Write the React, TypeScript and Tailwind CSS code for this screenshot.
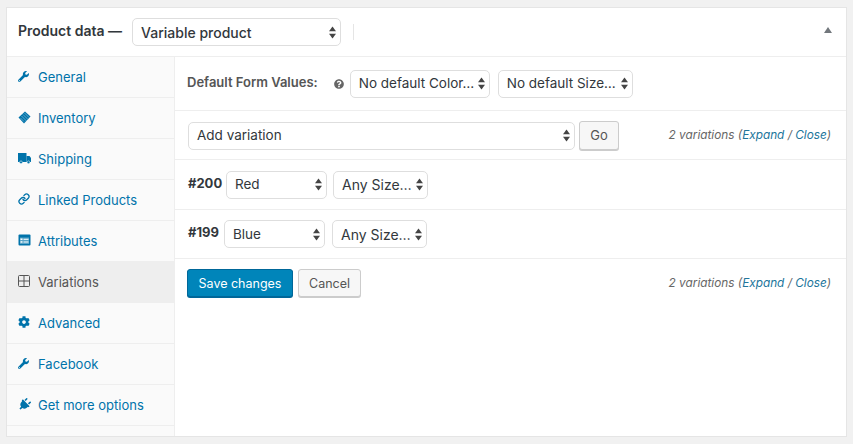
import React from "react";
import { FaWrench, FaCog, FaPlug, FaQuestionCircle } from "react-icons/fa";
import { Link as LinkIcon } from "lucide-react";

const Arrows = () => (
  <svg width="7" height="13" viewBox="0 0 7 13" className="shrink-0 text-[#444]" fill="currentColor">
    <path d="M3.5 0.5 L7 5.2 H0 Z" />
    <path d="M0 7.8 H7 L3.5 12.5 Z" />
  </svg>
);

const Select = ({ label, className, size = "text-[13.5px]" }: { label: string; className: string; size?: string }) => (
  <div className={"flex h-[28px] items-center justify-between rounded-[5px] border border-[#dedede] bg-white pl-[8px] pr-[4px] text-[#32373c] " + size + " " + className}>
    <span className="whitespace-nowrap">{label}</span>
    <Arrows />
  </div>
);

const TagIcon = () => (
  <svg width="13" height="13" viewBox="0 0 13 13">
    <path d="M7 0.5 L12.5 5.5 L6 12.5 L0.5 6.5 Z" fill="#0073aa" />
    <path d="M3.5 5 L8.5 10 M5 3.5 L10 8.5 M2.5 7 L6 10.5 M6.5 2 L11 6.5" stroke="#9cc9df" strokeWidth="0.6" />
  </svg>
);

const TruckIcon = () => (
  <svg width="13" height="11" viewBox="0 0 13 11" fill="#0073aa">
    <rect x="0" y="0" width="8.5" height="9" />
    <path d="M8.5 3 H11.5 L13 5 V9 H8.5 Z" />
    <circle cx="3" cy="9.3" r="1.4" stroke="#fff" strokeWidth="0.5" />
    <circle cx="10.5" cy="9.3" r="1.4" stroke="#fff" strokeWidth="0.5" />
  </svg>
);

const CardIcon = () => (
  <svg width="13" height="12" viewBox="0 0 13 12">
    <rect x="0.5" y="0.5" width="12" height="11" rx="1" fill="#0073aa" />
    <rect x="2" y="3.5" width="9" height="6.5" fill="#fff" opacity="0.35" />
    <rect x="2.5" y="4.5" width="2" height="1.5" fill="#fff" />
    <rect x="2.5" y="7.2" width="2" height="1.5" fill="#fff" />
    <rect x="5.5" y="4.8" width="5" height="1" fill="#fff" />
    <rect x="5.5" y="7.5" width="5" height="1" fill="#fff" />
  </svg>
);

const GridIcon = () => (
  <svg width="12" height="12" viewBox="0 0 12 12" fill="none" stroke="#555" strokeWidth="1">
    <rect x="0.5" y="0.5" width="11" height="11" rx="1" />
    <path d="M6 0.5 V11.5 M0.5 6 H11.5" />
  </svg>
);

const tabs: { label: string; icon: React.ReactNode; active?: boolean }[] = [
  { label: "General", icon: <FaWrench size={11} /> },
  { label: "Inventory", icon: <TagIcon /> },
  { label: "Shipping", icon: <TruckIcon /> },
  { label: "Linked Products", icon: <LinkIcon size={12} strokeWidth={2.6} /> },
  { label: "Attributes", icon: <CardIcon /> },
  { label: "Variations", icon: <GridIcon />, active: true },
  { label: "Advanced", icon: <FaCog size={12} /> },
  { label: "Facebook", icon: <FaWrench size={11} /> },
  { label: "Get more options", icon: <FaPlug size={13} className="rotate-[45deg]" /> },
];

const Counter = () => (
  <span className="text-[11.8px] italic text-[#666]">
    2 variations (<span className="text-[#21759b]">Expand</span> / <span className="text-[#21759b]">Close</span>)
  </span>
);

export default function App() {
  return (
    <div className="h-[444px] w-[853px] overflow-hidden bg-[#f1f1f1] pl-[6px] pt-[7px] font-['Inter','Liberation_Sans',sans-serif]">
      <div className="flex h-[430px] w-[841px] flex-col border border-[#e5e5e5] bg-white">
        <div className="flex h-[49px] shrink-0 items-center border-b border-[#eeeeee] pl-[11px] pr-[14px]">
          <span className="pb-[4px] text-[14px] font-semibold text-[#32373c]">Product data —</span>
          <Select label="Variable product" size="text-[14px] font-medium" className="ml-[10px] w-[209px]" />
          <div className="ml-[12px] h-[16px] w-px bg-[#e5e5e5]" />
          <svg width="8" height="6" viewBox="0 0 8 6" className="ml-auto mb-[4px]" fill="#72777c">
            <path d="M4 0 L8 6 H0 Z" />
          </svg>
        </div>
        <div className="flex min-h-0 flex-1">
          <div className="w-[168px] shrink-0 border-r border-[#eeeeee] bg-[#fafafa]">
            {tabs.map((t) => (
              <div
                key={t.label}
                className={
                  "flex h-[41px] items-center border-b pl-[11px] pt-[2px] text-[13px] " +
                  (t.active ? "border-[#eeeeee] bg-[#eeeeee] text-[#555]" : "border-[#eeeeee] text-[#0073aa]")
                }
              >
                <span className="flex w-[20px] -translate-y-[2px] items-center">{t.icon}</span>
                {t.label}
              </div>
            ))}
          </div>
          <div className="min-w-0 flex-1 text-[#32373c]">
            <div className="flex h-[54px] items-center border-b border-[#eeeeee] pl-[12px]">
              <span className="pb-[2px] text-[13px] font-semibold text-[#555]">Default Form Values:</span>
              <FaQuestionCircle size={10} className="ml-[16px] text-[#666]" />
              <Select label="No default Color…" className="ml-[6px] w-[140px]" />
              <Select label="No default Size…" className="ml-[8px] w-[135px]" />
            </div>
            <div className="flex h-[49px] items-center border-b border-[#eeeeee] pl-[13px] pr-[15px]">
              <Select label="Add variation" className="mt-[1px] w-[387px]" />
              <div className="ml-[4px] flex h-[29px] w-[40px] items-center justify-center rounded-[3px] border border-[#cccccc] bg-[#f7f7f7] pt-[2px] text-[13px] text-[#555] shadow-[0_1px_0_#ccc]">Go</div>
              <div className="ml-auto pb-[5px]"><Counter /></div>
            </div>
            <div className="flex h-[50px] items-center border-b border-[#eeeeee] pl-[13px]">
              <span className="w-[38px] pb-[2px] text-[13px] font-bold text-[#32373c]">#200</span>
              <Select label="Red" className="w-[101px]" />
              <Select label="Any Size…" size="text-[14px]" className="ml-[6px] w-[95px]" />
            </div>
            <div className="flex h-[49px] items-center border-b border-[#eeeeee] pl-[13px]">
              <span className="w-[36px] pb-[2px] text-[13px] font-bold text-[#32373c]">#199</span>
              <Select label="Blue" className="w-[101px]" />
              <Select label="Any Size…" size="text-[14px]" className="ml-[7px] w-[95px]" />
            </div>
            <div className="flex h-[48px] items-center pl-[12px] pr-[15px]">
              <div className="flex h-[28px] w-[106px] items-center justify-center rounded-[3px] border border-[#006799] bg-[#0085ba] pt-[2px] text-[12.5px] text-white shadow-[0_1px_0_#006799]">Save changes</div>
              <div className="ml-[5px] flex h-[28px] w-[63px] items-center justify-center rounded-[3px] border border-[#cccccc] bg-[#f7f7f7] pt-[2px] text-[12.5px] text-[#555] shadow-[0_1px_0_#ccc]">Cancel</div>
              <div className="ml-auto pb-[4px]"><Counter /></div>
            </div>
          </div>
        </div>
      </div>
    </div>
  );
}
